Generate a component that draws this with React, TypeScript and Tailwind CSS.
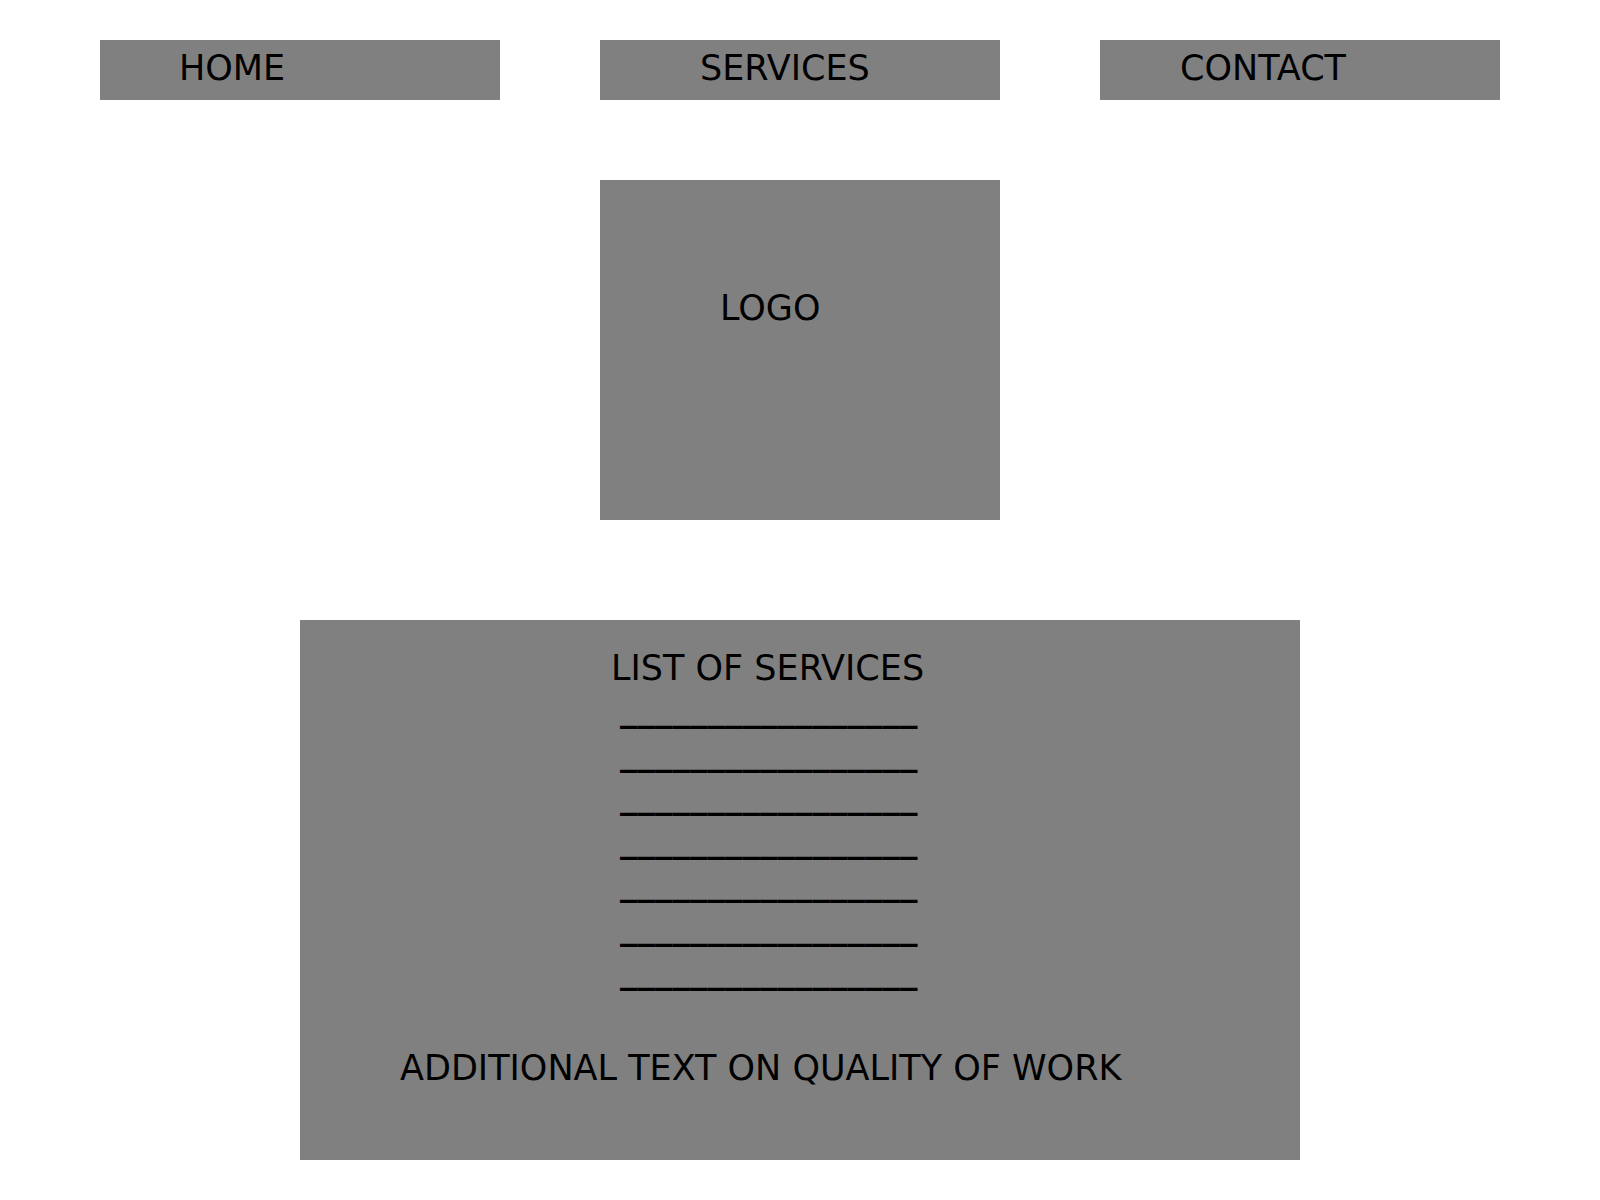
const navItems = [
  { label: "HOME", pad: "pl-[79px]" },
  { label: "SERVICES", pad: "pl-[100px]" },
  { label: "CONTACT", pad: "pl-[80px]" },
];

const serviceLines = Array.from({ length: 7 }, (_, i) => i);

export default function App() {
  return (
    <div className="min-h-[1200px] w-[1600px] bg-white pt-[40px] font-['DejaVu_Sans',sans-serif] text-[35px] text-black">
      {/* top nav */}
      <nav className="flex gap-[100px] px-[100px]">
        {navItems.map((item) => (
          <div key={item.label} className={`h-[60px] w-[400px] bg-[#808080] pt-[8px] leading-[41px] ${item.pad}`}>
            {item.label}
          </div>
        ))}
      </nav>

      {/* logo block */}
      <div className="mt-[80px] flex justify-center">
        <div className="h-[340px] w-[400px] bg-[#808080] pl-[120px] pt-[108px] leading-[41px]">LOGO</div>
      </div>

      {/* services block */}
      <div className="mt-[100px] flex justify-center">
        <div className="h-[540px] w-[1000px] bg-[#808080] pt-[28px]">
          <p className="pl-[311px] leading-[41px]">LIST OF SERVICES</p>
          <div className="mt-[-1px] pl-[320px] font-bold leading-[43.6px]">
            {serviceLines.map((i) => (
              <p key={i} className="whitespace-pre">_________________</p>
            ))}
          </div>
          <p className="mt-[55px] pl-[100px] leading-[41px]">ADDITIONAL TEXT ON QUALITY OF WORK</p>
        </div>
      </div>
    </div>
  );
}
